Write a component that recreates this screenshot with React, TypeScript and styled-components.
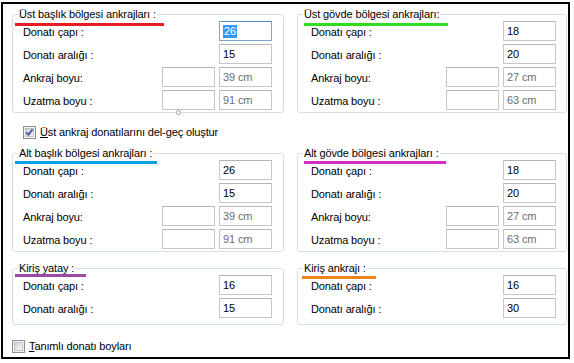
import React from 'react';
import styled, { createGlobalStyle } from 'styled-components';

const GlobalStyle = createGlobalStyle`
  html, body { margin: 0; padding: 0; background: #fff; }
  body {
    font-family: "Liberation Sans", Arial, sans-serif;
    font-size: 11px;
    letter-spacing: -0.12px;
    color: #000;
  }
`;

const Frame = styled.div`
  box-sizing: border-box;
  margin: 2px 0 0 1px;
  width: 569px;
  height: 357px;
  border: 2px solid #000;
  padding: 10px 0 0 9px;
  display: flex;
  flex-direction: column;
`;

const PairRow = styled.div<{ $mt: number }>`
  display: grid;
  grid-template-columns: 272px 270px;
  column-gap: 13px;
  margin-top: ${p => p.$mt}px;
`;

const GroupBox = styled.div<{ $pl: number; $pr: number; $pb: number }>`
  position: relative;
  box-sizing: border-box;
  border: 1px solid #d5dfe5;
  border-radius: 3px;
  padding: 0 ${p => p.$pr}px ${p => p.$pb}px ${p => p.$pl}px;
`;

const Legend = styled.div<{ $pl: number }>`
  width: fit-content;
  margin: -7px 0 1px ${p => 5 - p.$pl}px;
  padding: 0 1px;
  background: #fff;
  line-height: 12px;
  white-space: nowrap;
`;

const Underline = styled.div<{ $color: string }>`
  position: absolute;
  height: 3px;
  background: ${p => p.$color};
`;

const ResizeDot = styled.div`
  position: absolute;
  left: 163px;
  bottom: -3px;
  width: 5px;
  height: 5px;
  box-sizing: border-box;
  border: 1px solid #9aa0a6;
  border-radius: 50%;
  background: #fff;
`;

const RowList = styled.div`
  display: flex;
  flex-direction: column;
  gap: 3px;
`;

const FieldRow = styled.div`
  display: grid;
  grid-template-columns: 1fr 53px 53px;
  column-gap: 4px;
  align-items: center;
  height: 20px;
`;

const Label = styled.span`
  white-space: nowrap;
  line-height: 13px;
  padding-top: 2px;
`;

const TextBox = styled.div<{ $disabled?: boolean; $focused?: boolean; $col: number }>`
  grid-column: ${p => p.$col};
  box-sizing: border-box;
  height: 20px;
  border: 1px solid ${p => (p.$focused ? '#7ea6d2' : '#c4c6c9')};
  border-top-color: ${p => (p.$focused ? '#5d8cc0' : '#b3b5b8')};
  background: #fff;
  padding: 0 3px;
  line-height: 18px;
  color: ${p => (p.$disabled ? '#6d6d6d' : '#000')};
  white-space: nowrap;
`;

const Selected = styled.span`
  display: inline-block;
  background: #3399ff;
  color: #fff;
  line-height: 13px;
  padding: 0 1px;
`;

const CheckRow = styled.label<{ $mt: number; $ml: number }>`
  display: flex;
  align-items: center;
  gap: 4px;
  margin-top: ${p => p.$mt}px;
  margin-left: ${p => p.$ml}px;
  height: 13px;
  line-height: 13px;
  white-space: nowrap;
`;

const Key = styled.span`
  text-decoration: underline;
`;

const CheckBox: React.FC<{ checked: boolean; id: string }> = ({ checked, id }) => (
  <svg width="13" height="13" viewBox="0 0 13 13" style={{ flex: 'none' }}>
    <defs>
      <linearGradient id={id} x1="0" y1="0" x2="1" y2="1">
        <stop offset="0" stopColor="#cdd1d6" />
        <stop offset="1" stopColor="#f7f7f7" />
      </linearGradient>
    </defs>
    <rect x="0.5" y="0.5" width="12" height="12" fill="#f5f5f5" stroke="#8e8f8f" />
    <rect x="2.5" y="2.5" width="8" height="8" fill={`url(#${id})`} stroke="#b4b8bd" strokeWidth="0.8" />
    {checked && (
      <path d="M3.3 6.4 L5.4 8.9 L9.6 3.4" fill="none" stroke="#3f5da6" strokeWidth="1.8" strokeLinejoin="round" />
    )}
  </svg>
);

type Box = { value?: string; disabled?: boolean; focused?: boolean };
type Row = { label: string; boxes: [Box | null, Box] };
type Group = {
  title: string;
  line: { color: string; left: number; top: number; width: number };
  rows: Row[];
  dot?: boolean;
};

const anchorRows = (a: string, b: string, c: string, d: string, focusFirst = false): Row[] => [
  { label: 'Donatı çapı :', boxes: [null, { value: a, focused: focusFirst }] },
  { label: 'Donatı aralığı :', boxes: [null, { value: b }] },
  { label: 'Ankraj boyu:', boxes: [{ value: '', disabled: true }, { value: c, disabled: true }] },
  { label: 'Uzatma boyu :', boxes: [{ value: '', disabled: true }, { value: d, disabled: true }] },
];

const simpleRows = (a: string, b: string): Row[] => [
  { label: 'Donatı çapı :', boxes: [null, { value: a }] },
  { label: 'Donatı aralığı :', boxes: [null, { value: b }] },
];

const rowsData: { mt: number; pb: number; groups: [Group, Group] }[] = [
  {
    mt: 0,
    pb: 2,
    groups: [
      {
        title: 'Üst başlık bölgesi ankrajları :',
        line: { color: '#e31e27', left: 2, top: 8, width: 149 },
        rows: anchorRows('26', '15', '39 cm', '91 cm', true),
        dot: true,
      },
      {
        title: 'Üst gövde bölgesi ankrajları:',
        line: { color: '#2fdc1e', left: 6, top: 8, width: 144 },
        rows: anchorRows('18', '20', '27 cm', '63 cm'),
      },
    ],
  },
  {
    mt: 14,
    pb: 2,
    groups: [
      {
        title: 'Alt başlık bölgesi ankrajları :',
        line: { color: '#0f9ee3', left: 2, top: 7, width: 142 },
        rows: anchorRows('26', '15', '39 cm', '91 cm'),
      },
      {
        title: 'Alt gövde bölgesi ankrajları :',
        line: { color: '#d62bc9', left: 6, top: 7, width: 142 },
        rows: anchorRows('18', '20', '27 cm', '63 cm'),
      },
    ],
  },
  {
    mt: 16,
    pb: 6,
    groups: [
      {
        title: 'Kiriş yatay :',
        line: { color: '#9b4b9f', left: 2, top: 5, width: 71 },
        rows: simpleRows('16', '15'),
      },
      {
        title: 'Kiriş ankrajı :',
        line: { color: '#f08311', left: 4, top: 7, width: 74 },
        rows: simpleRows('16', '30'),
      },
    ],
  },
];

const colPad = [
  { pl: 10, pr: 11 },
  { pl: 13, pr: 10 },
];

const GroupView: React.FC<{ g: Group; col: number; pb: number }> = ({ g, col, pb }) => {
  const { pl, pr } = colPad[col];
  return (
    <GroupBox $pl={pl} $pr={pr} $pb={pb}>
      <Legend $pl={pl}>{g.title}</Legend>
      <Underline
        $color={g.line.color}
        style={{ left: g.line.left, top: g.line.top, width: g.line.width }}
      />
      <RowList>
        {g.rows.map(r => (
          <FieldRow key={r.label}>
            <Label>{r.label}</Label>
            {r.boxes.map((b, i) =>
              b ? (
                <TextBox key={i} $col={i + 2} $disabled={b.disabled} $focused={b.focused}>
                  {b.focused ? <Selected>{b.value}</Selected> : b.value}
                </TextBox>
              ) : null
            )}
          </FieldRow>
        ))}
      </RowList>
      {g.dot && <ResizeDot />}
    </GroupBox>
  );
};

export default function App() {
  const [first, second, third] = rowsData;
  return (
    <>
      <GlobalStyle />
      <Frame>
        <PairRow $mt={first.mt}>
          {first.groups.map((g, i) => (
            <GroupView key={g.title} g={g} col={i} pb={first.pb} />
          ))}
        </PairRow>
        <CheckRow $mt={13} $ml={11}>
          <CheckBox checked id="cb1" />
          <span>
            <Key>Ü</Key>st ankraj donatılarını del-geç oluştur
          </span>
        </CheckRow>
        <PairRow $mt={second.mt}>
          {second.groups.map((g, i) => (
            <GroupView key={g.title} g={g} col={i} pb={second.pb} />
          ))}
        </PairRow>
        <PairRow $mt={third.mt}>
          {third.groups.map((g, i) => (
            <GroupView key={g.title} g={g} col={i} pb={third.pb} />
          ))}
        </PairRow>
        <CheckRow $mt={15} $ml={0}>
          <CheckBox checked={false} id="cb2" />
          <span>
            <Key>T</Key>anımlı donatı boyları
          </span>
        </CheckRow>
      </Frame>
    </>
  );
}
